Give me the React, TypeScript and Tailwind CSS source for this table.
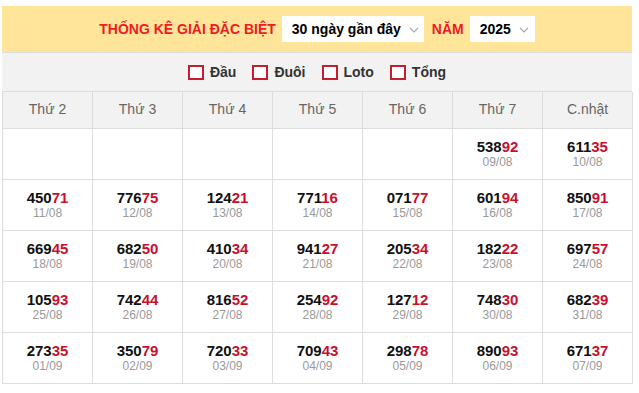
import React from "react";

const days = ["Thứ 2", "Thứ 3", "Thứ 4", "Thứ 5", "Thứ 6", "Thứ 7", "C.nhật"];
type Cell = [string, string] | null;
const rows: Cell[][] = [
  [null, null, null, null, null, ["53892", "09/08"], ["61135", "10/08"]],
  [["45071", "11/08"], ["77675", "12/08"], ["12421", "13/08"], ["77116", "14/08"], ["07177", "15/08"], ["60194", "16/08"], ["85091", "17/08"]],
  [["66945", "18/08"], ["68250", "19/08"], ["41034", "20/08"], ["94127", "21/08"], ["20534", "22/08"], ["18222", "23/08"], ["69757", "24/08"]],
  [["10593", "25/08"], ["74244", "26/08"], ["81652", "27/08"], ["25492", "28/08"], ["12712", "29/08"], ["74830", "30/08"], ["68239", "31/08"]],
  [["27335", "01/09"], ["35079", "02/09"], ["72033", "03/09"], ["70943", "04/09"], ["29878", "05/09"], ["89093", "06/09"], ["67137", "07/09"]],
];

function Chevron() {
  return (
    <svg width="10" height="6" viewBox="0 0 10 6" className="ml-[8px] mt-[1px]">
      <path d="M1 1 L5 5 L9 1" fill="none" stroke="#aaa" strokeWidth="1.2" />
    </svg>
  );
}

export default function App() {
  return (
    <div className="w-[639px] h-[393px] bg-white pt-[6px] pl-[2px]" style={{ fontFamily: '"Liberation Sans", Arial, sans-serif' }}>
      <div className="w-[630px]">
        <div className="h-[46px] bg-[#ffe599] flex items-center justify-center">
          <span className="text-[14px] font-bold text-[#ed1c24] mr-[6px] mt-[1px]">THỐNG KÊ GIẢI ĐẶC BIỆT</span>
          <div className="h-[26px] w-[142px] bg-white flex items-center pl-[10px] text-[14px] font-bold text-black">
            <span>30 ngày gần đây</span>
            <Chevron />
          </div>
          <span className="text-[14px] font-bold text-[#ed1c24] ml-[8px] mr-[6px] mt-[1px]">NĂM</span>
          <div className="h-[26px] w-[65px] bg-white flex items-center pl-[10px] text-[14px] font-bold text-black">
            <span>2025</span>
            <Chevron />
          </div>
        </div>
        <div className="h-[40px] bg-[#f2f2f2] border-y border-[#ddd] flex items-center justify-center gap-[16px] text-[14px] font-bold text-[#333]">
          {["Đầu", "Đuôi", "Loto", "Tổng"].map((l) => (
            <label key={l} className="flex items-center gap-[6px]">
              <span className="w-[16px] h-[15px] border-2 border-[#c41e2e] bg-white inline-block" />
              <span>{l}</span>
            </label>
          ))}
        </div>
        <table className="w-[630px] border-collapse table-fixed">
          <thead>
            <tr className="h-[36px]">
              {days.map((d) => (
                <th key={d} className="w-[90px] border border-t-0 border-[#ddd] bg-[#f2f2f2] text-[14px] font-normal text-[#666]">
                  {d}
                </th>
              ))}
            </tr>
          </thead>
          <tbody>
            {rows.map((r, i) => (
              <tr key={i} className="h-[51px]">
                {r.map((c, j) => (
                  <td key={j} className="border border-[#ddd] text-center align-middle p-0">
                    {c && (
                      <div className="flex flex-col items-center">
                        <div className="text-[15px] font-bold leading-[17px] text-[#111]">
                          {c[0].slice(0, 3)}
                          <span className="text-[#c8102e]">{c[0].slice(3)}</span>
                        </div>
                        <div className="text-[12px] leading-[14px] text-[#999]">{c[1]}</div>
                      </div>
                    )}
                  </td>
                ))}
              </tr>
            ))}
          </tbody>
        </table>
      </div>
    </div>
  );
}
